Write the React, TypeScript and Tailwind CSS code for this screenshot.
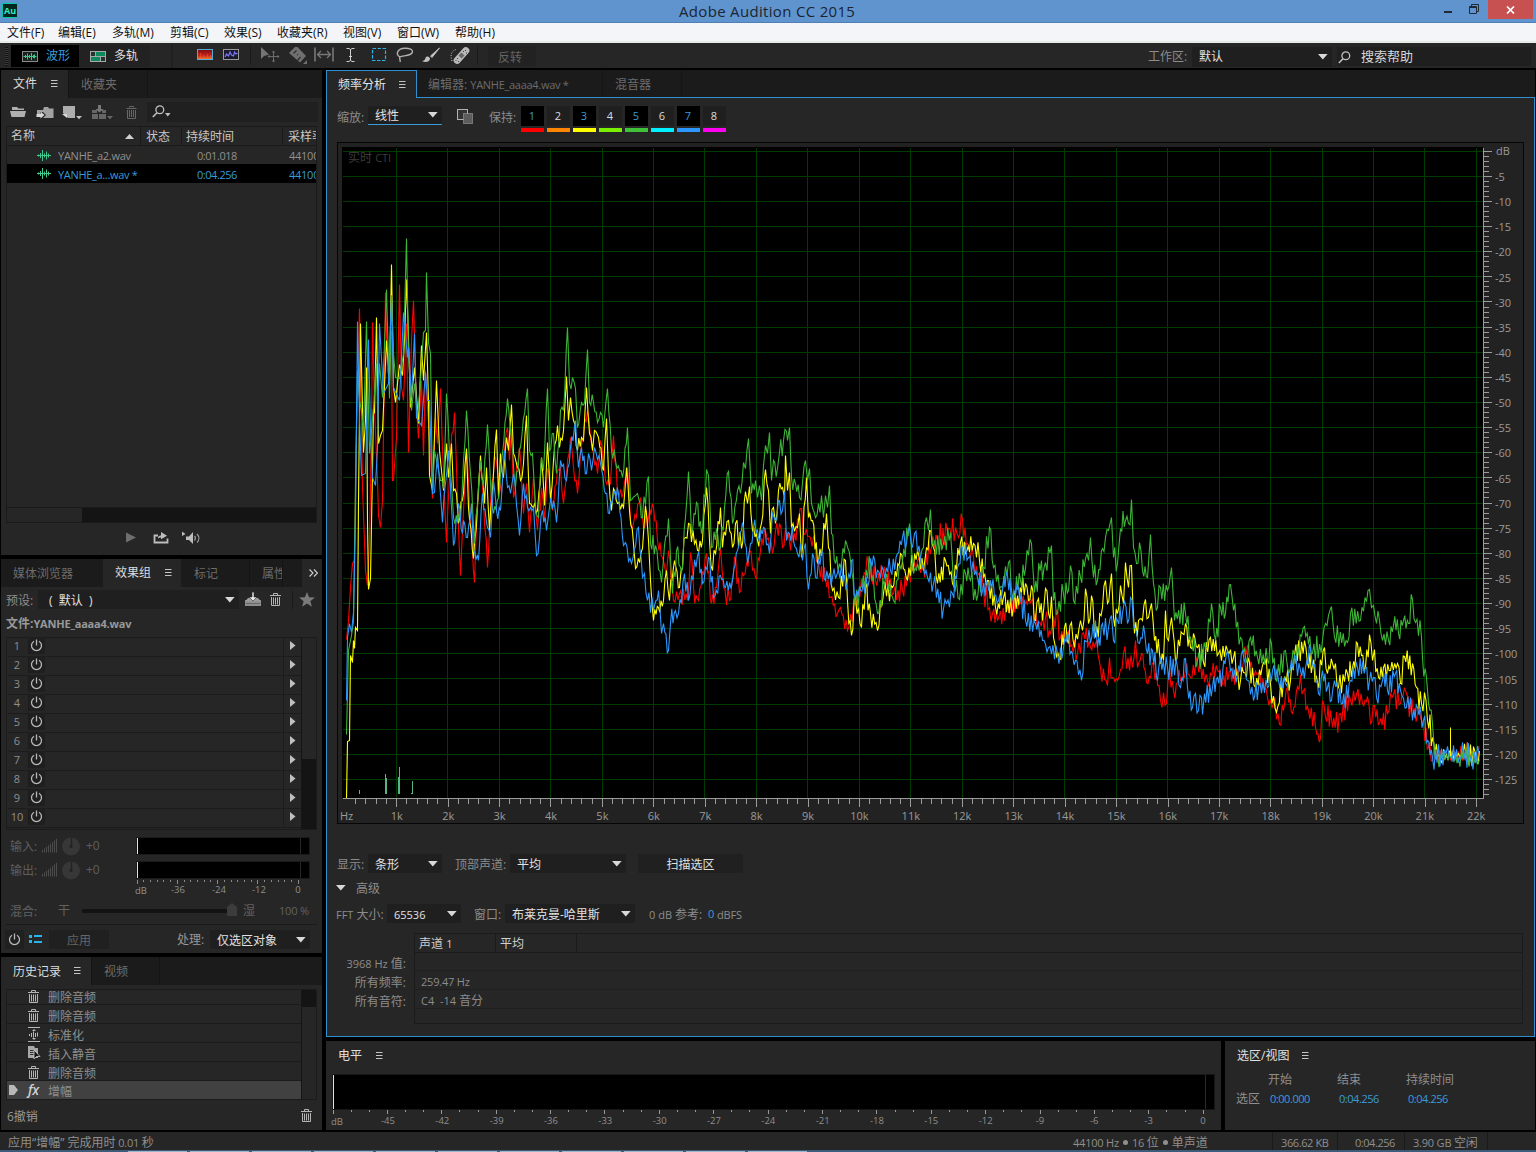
import React from "react";

/* ---------- spectrum data: x,y pairs in panel pixels ---------- */

const RED =
  "346,639 348,620 350,587 352,563 354,560 356,430 359,308 362,487 365,570 367,585 369,540 371,430 372,322 374,407 377,480 378,515 380,527 382,500 385,292 387,370 389,380 391,330 392,480 393,480 396,437 399,284 401,387 403,400 406,323 408,452 411,340 413,300 416,407 418,438 421,380 423,455 425,370 427,407 430,455 432,498 435,417 437,443 440,388 442,450 446,542 450,453 454,412 457,500 460,575 463,510 466,450 469,503 474,582 477,505 480,460 483,503 487,567 490,503 494,455 497,470 501,493 504,450 507,427 509,460 511,428 513,497 519,447 523,513 526,483 529,532 533,478 537,530 541,487 544,520 547,468 552,510 557,470 560,467 563,503 570,437 573,467 577,493 580,453 587,410 590,437 597,473 600,440 605,480 610,483 613,435 617,493 623,490 627,467 630,520 633,523 640,497 643,527 648,517 653,507 657,540 662,557 666,573 668,550 673,600 679,593 687,600 690,552 693,587 698,600 706,553 711,603 716,587 720,547 723,587 729,600 734,557 739,592 743,575 749,550 755,577 760,550 764,527 772,553 775,530 779,523 782,547 788,533 790,550 801,508 803,533 810,537 813,537 817,560 825,577 830,597 837,613 840,607 847,630 853,603 858,593 868,563 875,580 885,573 893,593 902,590 907,577 917,560 923,570 931,547 937,540 948,528 955,527 958,537 962,519 967,543 973,557 983,590 992,613 997,620 1007,607 1020,603 1031,600 1038,623 1045,617 1050,633 1056,610 1060,637 1067,637 1077,653 1083,632 1090,647 1095,643 1100,667 1107,685 1109,657 1112,677 1117,680 1123,653 1132,667 1135,640 1137,667 1141,653 1146,682 1153,663 1160,700 1166,703 1168,673 1173,690 1180,680 1185,670 1190,677 1197,663 1207,680 1217,670 1222,683 1230,670 1237,673 1243,660 1247,645 1252,673 1258,673 1267,697 1273,703 1279,724 1283,710 1287,687 1292,713 1297,686 1303,690 1308,710 1315,727 1320,738 1322,700 1325,717 1330,710 1332,727 1340,713 1350,700 1356,694 1362,703 1367,696 1370,723 1374,705 1379,723 1387,713 1393,694 1400,703 1405,690 1410,707 1417,713 1423,723 1428,747 1432,760";

const YELLOW =
  "346,798 347,741 349,740 350,655 352,662 353,640 354,648 355,627 357,630 358,500 360,323 363,452 365,420 366,367 367,520 368,589 370,578 372,470 373,408 374,413 376,317 378,443 380,435 382,430 386,340 389,380 391,264 393,387 395,402 399,364 402,375 404,340 406,279 408,338 410,407 414,367 418,423 421,345 423,380 426,332 428,400 429,475 432,490 436,380 439,450 443,490 446,443 448,477 451,443 453,490 456,493 458,523 463,493 466,448 468,507 473,558 477,503 480,455 484,503 486,467 489,530 493,473 496,429 498,497 500,453 503,477 506,437 508,450 511,404 513,453 517,467 520,480 523,463 526,415 529,503 533,507 537,510 541,457 544,505 547,442 550,500 553,460 557,425 559,447 563,430 566,376 568,420 570,397 573,420 577,450 581,437 583,440 586,387 589,433 592,450 594,430 598,437 603,470 606,418 608,473 611,510 613,488 617,503 623,507 626,467 629,510 633,543 635,568 642,548 645,505 648,540 650,580 653,620 658,607 663,600 666,570 669,600 674,560 679,587 685,537 688,523 697,550 702,540 706,487 709,540 712,570 715,553 720,507 722,547 728,520 732,547 735,523 741,548 745,491 747,503 749,486 752,530 757,540 761,523 765,469 768,490 770,533 773,507 775,523 778,490 782,487 784,497 785,455 787,490 789,472 791,527 797,527 799,513 801,557 806,477 808,517 812,520 817,563 822,547 826,513 828,547 832,590 838,597 845,560 847,600 851,635 855,597 861,627 865,587 870,613 877,630 883,593 892,587 900,553 907,580 917,550 923,570 929,530 933,547 937,583 945,560 952,583 960,542 965,553 973,543 979,560 987,580 995,607 1003,597 1013,607 1025,583 1028,600 1031,585 1035,620 1038,598 1042,620 1045,588 1048,613 1051,596 1053,637 1059,658 1064,627 1068,643 1071,622 1074,647 1080,620 1082,630 1085,588 1088,623 1091,595 1095,637 1102,607 1105,580 1107,603 1111,573 1113,617 1117,613 1120,585 1123,603 1125,562 1128,587 1131,565 1134,633 1138,620 1142,620 1145,599 1148,617 1151,603 1154,640 1159,653 1163,660 1165,610 1168,640 1171,617 1175,660 1182,633 1185,623 1190,647 1193,633 1197,647 1203,662 1210,637 1218,653 1227,650 1233,657 1240,680 1249,662 1255,687 1263,662 1270,683 1276,712 1283,680 1290,680 1294,655 1304,640 1307,663 1312,665 1317,682 1324,647 1327,673 1332,663 1338,687 1347,673 1352,667 1357,643 1365,667 1369,634 1372,660 1374,649 1378,677 1383,667 1390,670 1397,663 1400,683 1404,656 1412,663 1416,687 1421,703 1424,692 1427,720 1432,737 1437,753";

const GREEN =
  "346,734 348,650 351,635 353,620 355,480 357,370 359,400 361,410 363,433 366,321 369,453 371,430 373,407 376,363 377,407 379,363 382,397 386,289 389,398 391,295 393,353 395,377 399,378 403,353 406,238 408,353 411,410 414,383 417,417 420,380 423,332 425,330 426,272 428,342 430,353 432,493 434,450 440,480 443,488 446,393 450,473 453,517 460,520 466,410 470,473 474,543 480,460 483,487 487,424 490,483 493,513 498,497 502,453 507,398 511,440 515,487 520,447 527,388 529,450 532,453 535,510 538,517 541,457 543,470 547,388 549,450 553,433 556,473 560,410 563,410 567,327 569,383 572,377 575,388 577,427 581,402 584,403 587,349 589,402 593,402 597,422 600,412 603,427 607,388 611,450 615,460 622,477 627,427 630,500 637,493 642,517 648,476 650,543 655,545 661,582 664,545 668,518 672,593 676,550 681,573 685,517 688,471 691,533 696,502 701,533 706,469 708,475 711,547 716,528 720,547 728,471 732,523 737,490 740,493 743,462 745,468 748,438 751,493 755,480 757,497 759,485 761,500 763,465 765,445 767,453 769,432 771,480 773,460 777,468 779,452 783,440 786,431 787,440 789,427 791,477 795,483 799,497 802,482 805,460 807,480 809,468 811,503 815,517 821,495 823,517 825,495 827,507 829,485 831,533 835,563 840,567 845,540 850,560 855,603 860,587 870,565 877,613 885,577 893,600 902,560 909,523 913,573 920,557 926,517 928,530 930,509 933,547 943,543 950,532 953,583 959,599 965,573 970,580 976,600 983,567 989,527 993,567 1002,587 1008,562 1012,597 1020,580 1025,568 1031,543 1034,592 1041,560 1042,580 1045,562 1051,545 1053,600 1057,613 1063,593 1068,590 1070,565 1073,600 1080,577 1085,558 1088,560 1090,537 1093,577 1097,580 1102,548 1105,537 1108,530 1111,517 1113,557 1117,563 1120,528 1125,520 1128,523 1131,499 1133,547 1136,563 1139,542 1142,570 1147,577 1150,534 1153,583 1157,607 1160,587 1167,590 1171,567 1174,620 1185,613 1190,637 1197,660 1205,647 1211,603 1215,640 1220,607 1225,613 1230,584 1233,610 1240,637 1247,657 1250,637 1257,657 1267,660 1271,643 1275,677 1285,650 1288,673 1294,655 1304,626 1312,653 1322,640 1325,623 1331,606 1334,637 1347,642 1350,613 1360,620 1369,589 1371,607 1373,605 1376,623 1379,620 1382,640 1388,640 1393,625 1398,633 1403,620 1408,623 1412,599 1415,622 1421,637 1422,657 1426,677 1428,703 1432,723 1434,753";

const BLUE =
  "346,700 347,637 349,623 351,632 353,612 355,520 357,321 359,420 361,475 365,473 368,339 370,430 372,477 375,485 377,447 379,323 383,393 388,383 391,295 393,387 399,400 403,312 407,357 408,347 411,397 414,333 416,417 421,425 425,372 427,400 429,400 432,493 434,492 437,453 442,522 445,483 448,450 453,545 458,503 462,533 463,520 467,537 471,503 473,550 478,560 482,493 487,527 490,537 493,480 496,510 500,510 504,450 507,487 510,493 513,473 519,535 523,483 527,507 533,507 536,555 539,537 542,510 546,530 549,507 553,500 556,522 560,460 566,480 570,447 575,420 578,467 581,447 586,473 588,453 591,470 594,447 600,463 605,493 609,513 613,493 618,493 623,545 625,542 631,563 638,527 642,577 644,573 647,600 653,610 658,590 661,633 663,623 668,650 670,623 675,610 678,613 684,573 688,600 697,555 702,583 708,557 713,597 720,575 725,587 732,580 737,550 742,522 747,563 753,527 758,537 763,527 769,553 772,512 775,520 779,500 782,510 784,491 786,540 789,533 793,540 797,553 800,543 802,560 805,543 808,589 812,553 815,577 821,550 825,580 832,577 838,570 847,580 851,560 855,597 860,590 867,587 873,555 877,570 883,570 890,570 897,553 902,537 906,543 909,526 912,547 914,533 920,557 927,577 933,583 943,608 952,593 957,567 962,547 968,557 977,577 982,590 987,583 998,600 1002,590 1007,575 1012,597 1018,587 1025,620 1035,623 1042,640 1048,647 1057,653 1063,647 1067,633 1072,653 1075,660 1081,680 1084,640 1090,643 1095,620 1097,647 1102,623 1108,627 1111,615 1113,640 1117,620 1122,613 1124,600 1127,623 1130,597 1133,623 1139,643 1143,625 1147,653 1152,650 1157,680 1160,657 1167,667 1177,667 1180,687 1185,658 1187,687 1192,707 1195,693 1198,710 1201,697 1202,714 1204,693 1212,687 1217,677 1222,673 1227,650 1230,670 1237,673 1242,650 1247,680 1253,700 1258,687 1267,687 1272,670 1278,680 1285,683 1294,655 1300,670 1305,667 1310,648 1313,667 1318,693 1322,670 1327,687 1331,700 1334,680 1342,703 1350,680 1357,667 1365,667 1369,680 1373,677 1376,697 1382,680 1387,690 1395,673 1400,690 1406,707 1410,697 1412,720 1417,707 1423,720 1427,740 1432,757";

function trace(src: string, seed: number) {
  let s = seed;
  const rnd = () => {
    s = (s * 1664525 + 1013904223) % 4294967296;
    return s / 4294967296 - 0.5;
  };
  const keys = src.split(" ").map((p) => p.split(",").map(Number));
  const out: string[] = [];
  let flip = 1;
  for (let i = 0; i < keys.length - 1; i++) {
    const [x0, y0] = keys[i];
    const [x1, y1] = keys[i + 1];
    out.push(`${x0},${y0}`);
    if (x0 < 440) continue;
    const amp = x0 < 640 ? 10 : x0 < 850 ? 15 : 17;
    const n = Math.round((x1 - x0) / 1.4);
    for (let k = 1; k < n; k++) {
      flip = -flip;
      const t = k / n;
      const y = y0 + (y1 - y0) * t + (rnd() * 0.6 + flip * (0.12 + Math.abs(rnd()) * 0.95)) * amp;
      out.push(`${(x0 + (x1 - x0) * t).toFixed(1)},${y.toFixed(1)}`);
    }
  }
  const last = keys[keys.length - 1];
  out.push(`${last[0]},${last[1]}`);
  for (let x = last[0] + 1.5; x < 1480; x += 1.5) {
    flip = -flip;
    out.push(`${x.toFixed(1)},${(755.5 + rnd() * 11 + flip * Math.abs(rnd()) * 20).toFixed(1)}`);
  }
  return out.join(" ");
}

const TRACES = [
  { c: "#ff0000", d: trace(RED, 11) },
  { c: "#ffff00", d: trace(YELLOW, 23) },
  { c: "#3cb535", d: trace(GREEN, 37) },
  { c: "#2c98ff", d: trace(BLUE, 51) },
];

const range = (n: number) => Array.from({ length: n }, (_, i) => i);

function Spectrum() {
  return (
    <svg width="1187" height="682" viewBox="337 142 1187 682" className="block">
      <rect x="337.5" y="142.5" width="1186" height="681" fill="#222222" stroke="#060606" />
      <rect x="342" y="147" width="1141" height="651" fill="#000" />
      <g fill="#003c00">
        {range(22).map((i) => (
          <rect key={i} x={Math.floor(396.3 + i * 51.43)} y="148" width="1" height="650" />
        ))}
        {range(26).map((i) => (
          <rect key={i} x="343" y={Math.floor(151.2 + i * 25.13)} width="1140" height="1" />
        ))}
      </g>
      <text x="348" y="162" fontSize="12" fill="#3c3c3c">实时 <tspan fontSize="11">CTI</tspan></text>
      <g transform="translate(.5 .5)" fill="none" strokeWidth="1.1">
        {TRACES.map((t) => (
          <polyline key={t.c} points={t.d} stroke={t.c} />
        ))}
      </g>
      <path d="M1450.500 756V727.500" stroke="#ffff00" />
      <g fill="#57b48a">
        <rect x="359" y="790" width="1" height="4" />
        <rect x="385" y="774" width="1" height="20" />
        <rect x="386" y="778" width="1" height="16" />
        <rect x="398" y="777" width="1" height="17" />
        <rect x="399" y="767" width="1" height="27" />
        <rect x="411" y="793" width="1" height="1" />
        <rect x="412" y="781" width="1" height="13" />
      </g>
      <g fill="#9c9c9c">
        <rect x="343" y="798" width="1141" height="1" />
        <rect x="1483" y="148" width="1" height="651" />
        {range(111).map((i) => {
          const x = Math.floor(345.2 + i * 10.286);
          return i > 0 ? <rect key={i} x={x} y="799" width="1" height={i % 5 === 0 ? 8 : 5} /> : null;
        })}
        {range(129).map((i) => (
          <rect key={i} x="1484" y={Math.floor(151.2 + i * 5.026)} width={i % 5 === 0 ? 8 : 5} height="1" />
        ))}
      </g>
      <g fontSize="11" fill="#9a9a9a">
        <text x="340" y="820">Hz</text>
        {range(22).map((i) => (
          <text key={i} x={396.8 + i * 51.4} y="820" textAnchor="middle">{`${i + 1}k`}</text>
        ))}
        <text x="1496" y="155">dB</text>
        {range(25).map((i) => (
          <text key={i} x="1495" y={181 + i * 25.13}>{`-${(i + 1) * 5}`}</text>
        ))}
      </g>
    </svg>
  );
}

/* ---------- small parts ---------- */

const Tri = ({ className = "" }: { className?: string }) => (
  <svg width="10" height="6" viewBox="0 0 10 6" className={`shrink-0 ${className}`}>
    <path d="M0 0h9.600L4.800 5.600z" fill="#d8d8d8" />
  </svg>
);

const Burger = ({ className = "" }: { className?: string }) => (
  <svg width="7" height="8" viewBox="0 0 7 8" className={`shrink-0 ${className}`} fill="#c4c4c4">
    <path d="M0 0h6.500v1H0zM0 3h6.500v1H0zM0 6h6.500v1H0z" />
  </svg>
);

const Trash = ({ c = "#b4b4b4", className = "" }: { c?: string; className?: string }) => (
  <svg width="11" height="13" viewBox="0 0 11 13" className={`shrink-0 ${className}`}>
    <path d="M3.500 2V.5h4V2" stroke={c} fill="none" />
    <path d="M0 2.500h11" stroke={c} />
    <path d="M1.500 4v8.500h8V4M3.500 4.500v7M5.500 4.500v7M7.500 4.500v7" stroke={c} fill="none" />
  </svg>
);

const Power = ({ className = "" }: { className?: string }) => (
  <svg width="13" height="13" viewBox="0 0 13 13" className={`shrink-0 ${className}`} fill="none" stroke="#b8b8b8" strokeWidth="1.3">
    <path d="M4 2.200a5 5 0 1 0 5 0M6.500.5v6" />
  </svg>
);

const Search = ({ className = "" }: { className?: string }) => (
  <svg width="13" height="13" viewBox="0 0 13 13" className={`shrink-0 ${className}`} fill="none" stroke="#c0c0c0">
    <circle cx="7.800" cy="4.800" r="3.900" strokeWidth="1.300" />
    <path d="M5 7.700L.8 12" strokeWidth="1.600" />
  </svg>
);

const Wave = ({ className = "" }: { className?: string }) => (
  <svg width="14" height="11" viewBox="0 0 14 11" className={`shrink-0 ${className}`} stroke="#3fc98f" fill="none">
    <path d="M0 5.500h14M1.500 4.500v2M3.500 3v5M5.500 0v11M7.500 3.500v4M9.500 1.500v8M11.500 3.500v4" />
  </svg>
);

const Drop = ({ w, children, underline }: { w: string; children: React.ReactNode; underline?: boolean }) => (
  <div
    className={`${w} flex h-[19px] shrink-0 items-center justify-between bg-[#1f1f1f] pr-[4px] pl-[7px] text-[#e2e2e2] ${
      underline ? "border-b border-[#3a9bd9]" : ""
    }`}
  >
    <span className="pt-[2px]">{children}</span>
    <Tri />
  </div>
);

/* ---------- top bars ---------- */

function TitleBar() {
  return (
    <div className="flex h-[23px] shrink-0 border-b border-[#4f7fb5] bg-[#6094ce]">
      <div className="mt-[3px] ml-[2px] flex h-[15px] w-[16px] items-center justify-center rounded-[1px] border border-[#00c8a8] bg-[#04261f] text-[9px] leading-none font-bold text-[#2ee8c4]">
        Au
      </div>
      <div className="flex-1 pl-[661px] text-[15px] leading-[23px] tracking-[0.32px] text-[#1b2430]">Adobe Audition CC 2015</div>
      <div className="flex">
        <svg width="40" height="20" viewBox="1444 0 40 20" fill="none" stroke="#1f2a36">
          <path d="M1444 12h8" strokeWidth="2" />
          <path d="M1469.500 6.500h7v7h-7zM1469 7.500h8" />
          <path d="M1471.500 6V4.500h7v7h-2" />
        </svg>
        <div className="mr-[3px] ml-[4px] flex h-[19px] w-[45px] items-center justify-center bg-[#c75050]">
          <svg width="9" height="8" viewBox="0 0 9 8" stroke="#fff" strokeWidth="1.700">
            <path d="M1 .5l7 7M8 .5l-7 7" />
          </svg>
        </div>
      </div>
    </div>
  );
}

function MenuBar() {
  return (
    <div className="flex h-[20px] shrink-0 border-b-2 border-[#e6ebea] bg-[#f4f5f8] pl-[7px] text-[12px] leading-[20px] text-[#111]">
      <div className="w-[51px]">文件(F)</div>
      <div className="w-[54px]">编辑(E)</div>
      <div className="w-[58px]">多轨(M)</div>
      <div className="w-[54px]">剪辑(C)</div>
      <div className="w-[53px]">效果(S)</div>
      <div className="w-[66px]">收藏夹(R)</div>
      <div className="w-[54px]">视图(V)</div>
      <div className="w-[58px]">窗口(W)</div>
      <div>帮助(H)</div>
    </div>
  );
}

function ToolIcons() {
  return (
    <svg width="330" height="25" viewBox="150 43 330 25" fill="none" className="shrink-0">
      <defs>
        <linearGradient id="heat" x1="0" y1="0" x2="0" y2="1">
          <stop offset="0" stopColor="#7a0d10" />
          <stop offset=".6" stopColor="#c8241a" />
          <stop offset="1" stopColor="#f08a2c" />
        </linearGradient>
      </defs>
      <path d="M172 43v25" stroke="#1a1a1a" />
      <rect x="197.500" y="49.500" width="15" height="10" fill="url(#heat)" stroke="#59a9d6" />
      <path d="M200.500 53v6M203.500 55v4M207.500 54v5M210.500 55v4" stroke="#f0602c" strokeOpacity=".5" />
      <rect x="223.500" y="49.500" width="15" height="10" fill="#1a1a2c" stroke="#9a9a9a" />
      <path d="M225 57l1.500-3 2 2 1.500-4 1.500 3 2 1 1-4 1.500 2 1.500-1" stroke="#7878f8" strokeWidth="1.200" />
      <path d="M250.500 46v19M477.500 46v19" stroke="#1a1a1a" />
      <path d="M261 47v12l3-3 5-1.500z" fill="#757575" />
      <path d="M273.500 51v11M268 56.500h11" stroke="#6c6c6c" />
      <path d="M273.500 50.500l1.800 2h-3.600zM273.500 62.500l1.800-2h-3.600zM267.500 56.500l2-1.800v3.600zM279.500 56.500l-2-1.800v3.600z" fill="#6c6c6c" />
      <path d="M289 53l6-6h2.500l8.500 9-6 6.500z" fill="#707070" />
      <path d="M293.500 53.500l3-3M300.500 57l-3 3.500M297 54.500l1 .5" stroke="#2a2a2a" strokeWidth="1.200" />
      <path d="M307 60v4h-4z" fill="#707070" />
      <path d="M315 47.500v14M333 47.500v14" stroke="#777" strokeWidth="1.600" />
      <path d="M318 54.500h12M321 51l-3.500 3.500 3.500 3.500M327 51l3.500 3.500-3.500 3.500" stroke="#777" strokeWidth="1.300" />
      <path d="M346.500 48.500h2.500l1.500 1 1.500-1h2.500M350.500 49v12M346.500 61.500h2.500l1.500-1 1.500 1h2.500M349 56.500h3" stroke="#cfcfcf" />
      <rect x="372.500" y="48.500" width="13" height="12" stroke="#29b2ea" strokeWidth="1.200" strokeDasharray="3.500 1.500" />
      <path d="M400 57c-5-3-2.500-8.500 5-8.800 8-.3 9.500 4.300 5 6.300-4 1.800-8 1-10 2.500-1.500 1.200 1 2.300 0 5" stroke="#b0b0b0" strokeWidth="1.400" />
      <path d="M439.500 48l-9 8 1.500 1.500z" fill="#d0d0d0" stroke="#b8b8b8" />
      <path d="M422 61c2 0 3-1 3.500-3 1-2.500 4.500-1.500 4.500 1-.5 3-5 4-8 2z" fill="#c0c0c0" />
      <rect x="-3.500" y="-10" width="7" height="20" rx="3.500" transform="translate(461.500 55.500) rotate(42)" fill="#b9b9b9" />
      <path d="M458.500 55.500l3-3 3 3-3 3z" fill="#6a6a6a" />
      <path d="M455.500 60.500h1M458 61.500h1M457 58.500h1M465 50.500h1M466 53h1M463 51.500h1" stroke="#444" />
      <path d="M452 61c-2-5-1-11 5-11.500" stroke="#c8c8c8" strokeDasharray="1 1.500" />
    </svg>
  );
}

function ToolBar() {
  return (
    <div className="flex h-[25px] shrink-0 items-start bg-[#262626] text-[12px] leading-[28px]">
      <div className="mt-[4px] ml-[5px] h-[19px] w-[3px] bg-[repeating-linear-gradient(#111_0_1px,#3a3a3a_1px_2px)]" />
      <div className="mt-[2px] ml-[3px] flex h-[22px] w-[68px] items-center bg-black pl-[11px] text-[#3a9bd9]">
        <svg width="16" height="11" viewBox="0 0 16 11" className="mr-[8px]" fill="none">
          <rect x=".5" y=".5" width="15" height="10" stroke="#8a8a8a" fill="#15241d" />
          <path d="M1.500 5.500h13M3.500 4v3M5.500 2.500v6M7.500 4v3M9.500 2v7M11.500 4v3M12.500 3.500v4" stroke="#3fc98f" />
        </svg>
        波形
      </div>
      <div className="mt-[2px] flex h-[22px] w-[71px] items-center bg-[#222] pl-[11px] text-[#e0e0e0]">
        <svg width="16" height="11" viewBox="0 0 16 11" className="mr-[8px]">
          <rect width="16" height="11" fill="#a5aaa8" />
          <path d="M1 1h4v4H1zM6 1h9v4H6zM1 6h9v4H1zM11 6h4v4h-4z" fill="#0d8a5c" />
          <path d="M1 1h4v4H1zM11 6h4v4h-4z" fill="#24332d" />
        </svg>
        多轨
      </div>
      <ToolIcons />
      <div className="mt-[3px] ml-[8px] h-[20px] w-[48px] bg-[#222] pl-[10px] leading-[23px] text-[#646464]">反转</div>
      <div className="flex-1" />
      <div className="w-[44px] text-[#8c8c8c]">工作区:</div>
      <div className="mt-[4px] flex h-[20px] w-[140px] items-center justify-between bg-[#1f1f1f] pr-[4px] pl-[7px] text-[#e2e2e2]">
        默认
        <Tri className="-mt-px" />
      </div>
      <div className="mt-[4px] mr-[5px] ml-[5px] flex h-[19px] w-[194px] items-center bg-[#1f1f1f] pl-[1px] text-[13px] text-[#d6d6d6]">
        <Search className="mt-[1px] mr-[10px]" />
        <span className="-mt-[2px]">搜索帮助</span>
      </div>
    </div>
  );
}

/* ---------- left column ---------- */

function FilesPanel() {
  return (
    <div className="flex h-[485px] flex-col bg-[#262626]">
      <div className="flex h-[28px] bg-[#1b1b1b] leading-[30px]">
        <div className="flex w-[67px] items-center bg-[#262626] pl-[12px] text-[#dcdcdc]">
          <span className="w-[38px]">文件</span>
          <Burger />
        </div>
        <div className="w-[80px] border-r border-l border-[#141414] pl-[12px] text-[#6c6c6c]">收藏夹</div>
      </div>
      <div className="flex h-[28px] items-center">
        <svg width="146" height="24" viewBox="1 100 146 24" className="shrink-0">
          <path d="M12 110v-3h5l1.500 1.500H24v1.500zM10 111h16l-1.500 6h-13z" fill="#b0b0b0" />
          <path d="M37 110h6l1-3h4l1 1.500h4.500V118H43l3-3-3-3h-3v3h-3z" fill="#a2a2a2" />
          <path d="M36.500 114h4v-2.500l4 3.500-4 3.500V117h-4z" fill="#d8d8d8" />
          <path d="M63 106h12v12h-7l-5-5z" fill="#adadad" />
          <path d="M62 114h5v4z" fill="#d8d8d8" />
          <path d="M76 116h6l-3 3.200z" fill="#c0c0c0" />
          <path d="M92 110h5v3h-5zM92 114h6v5h-6zM99 114h7v5h-7zM102 110h4v3h-4z" fill="#666" />
          <path d="M98 105h3v4h2.500l-4 3.500-4-3.500H98z" fill="#777" />
          <path d="M107 116h6l-3 3.200z" fill="#666" />
          <path d="M129.500 107.500v-1h4v1M126.500 108.500h10M127.500 110v8.500h8V110M129.500 110v7M131.500 110v7M133.500 110v7" stroke="#666" fill="none" />
        </svg>
        <div className="flex h-[20px] w-[171px] items-center bg-[#202020] pl-[5px]">
          <Search className="-mt-px" />
          <svg width="6" height="4" viewBox="0 0 6 4" className="mt-[5px]">
            <path d="M0 0h5.500L2.800 3.500z" fill="#c0c0c0" />
          </svg>
        </div>
      </div>
      <div className="ml-[5px] flex h-[397px] w-[311px] flex-col border border-[#1a1a1a] text-[11px]">
        <div className="flex h-[19px] border-b border-[#1a1a1a] text-[12px] leading-[20px] text-[#c8c8c8]">
          <div className="flex w-[134px] items-center justify-between border-r border-[#1a1a1a] pr-[6px] pl-[4px]">
            名称
            <svg width="9" height="5" viewBox="0 0 9 5"><path d="M0 5h9L4.500 0z" fill="#d0d0d0" /></svg>
          </div>
          <div className="w-[41px] border-r border-[#1a1a1a] pl-[5px]">状态</div>
          <div className="w-[101px] border-r border-[#1a1a1a] pl-[4px]">持续时间</div>
          <div className="w-[33px] overflow-hidden pl-[5px] whitespace-nowrap">采样率</div>
        </div>
        <div className="flex h-[18px] items-center pt-px tracking-[-0.25px] text-[#8f8f8f]">
          <Wave className="ml-[30px]" />
          <div className="ml-[7px] w-[139px] pt-px">YANHE_a2.wav</div>
          <div className="w-[92px] pt-px tracking-[-0.45px]">0:01.018</div>
          <div className="w-[27px] overflow-hidden pt-px">44100</div>
        </div>
        <div className="flex h-[19px] items-center bg-black tracking-[-0.25px] text-[#3a9bd9]">
          <Wave className="ml-[30px]" />
          <div className="ml-[7px] w-[139px] pt-[2px] tracking-[-0.32px]">YANHE_a...wav *</div>
          <div className="w-[92px] pt-[2px] tracking-[-0.45px]">0:04.256</div>
          <div className="w-[27px] overflow-hidden pt-[2px]">44100</div>
        </div>
        <div className="flex-1" />
        <div className="flex h-[15px] border-t border-[#1a1a1a] bg-[#141414]">
          <div className="w-[75px] bg-[#262626]" />
        </div>
      </div>
      <svg width="80" height="16" viewBox="124 530 80 16" className="mt-[7px] ml-[123px]" fill="none">
        <path d="M126 532.500v10l10-5z" fill="#6e6e6e" />
        <path d="M158 535.500h-3.500v7h13v-4" stroke="#bdbdbd" strokeWidth="1.800" />
        <path d="M158 538.500c0-3 2-3 3-3v-3.500l6 3.700-6 3.500V537.500c-1 0-2 0-3 1z" fill="#bdbdbd" />
        <path d="M182 531.500v4.500l3.500-2zM186 536.500h3l4-4.500v12l-4-4h-3z" fill="#bdbdbd" />
        <path d="M194.500 536c1 1.200 1 3.300 0 4.500M197 534c2.500 2.500 2.500 6 0 8.500" stroke="#9a9a9a" strokeWidth="1.200" />
      </svg>
    </div>
  );
}

function Gain({ label }: { label: string }) {
  return (
    <div className="flex h-[24px] items-center text-[#5e5e5e]">
      <div className="ml-[9px] w-[32px] pt-px text-[12px]">{label}</div>
      <svg width="40" height="19" viewBox="0 0 40 19" className="shrink-0">
        <g fill="#4c4c4c">
          {range(8).map((i) => (
            <rect key={i} x={i * 2} y={13 - i * 1.6} width="1" height={2.500 + i * 1.600} />
          ))}
        </g>
        <circle cx="29" cy="9.500" r="9" fill="#373737" />
        <path d="M29.500 1v9" stroke="#222" strokeWidth="1.300" />
        <circle cx="29" cy="9.500" r="1.500" fill="#222" />
      </svg>
      <div className="ml-[4px] w-[50px]">+0</div>
      <div className="flex h-[18px] w-[174px] justify-between border border-[#1a1a1a] bg-black">
        <div className="w-px bg-[#ffff00]" />
        <div className="mr-[8px] w-px bg-[#262626]" />
      </div>
    </div>
  );
}

function EffectsPanel() {
  return (
    <div className="mt-[4px] flex h-[394px] flex-col bg-[#262626]">
      <div className="flex h-[28px] bg-[#1b1b1b] text-[12px] leading-[30px] whitespace-nowrap text-[#6c6c6c]">
        <div className="w-[102px] pl-[12px]">媒体浏览器</div>
        <div className="flex w-[78px] items-center bg-[#262626] pl-[12px] text-[#dcdcdc]">
          <span className="w-[50px]">效果组</span>
          <Burger />
        </div>
        <div className="w-[69px] border-r border-[#141414] pl-[13px]">标记</div>
        <div className="w-[33px] overflow-hidden border-r border-[#141414] pl-[12px]">属性</div>
        <div className="w-[19px]" />
        <div className="flex flex-1 items-center bg-[#262626] pl-[7px]">
          <svg width="9" height="8" viewBox="0 0 9 8" fill="none" stroke="#ccc" strokeWidth="1.200"><path d="M.5.500L4 4 .5 7.500M5 .500L8.500 4 5 7.500" /></svg>
        </div>
      </div>
      <div className="mt-[3px] flex h-[19px] items-center pl-[5px] text-[12px]">
        <div className="w-[32px] pt-[2px] text-[#8c8c8c]">预设:</div>
        <Drop w="w-[201px]"><span className="pl-[4px]">(&nbsp; 默认 &nbsp;)</span></Drop>
        <svg width="16" height="15" viewBox="0 0 16 15" className="ml-[6px]">
          <path d="M0 8h16v6H0z" fill="#8d8d8d" /><path d="M3 6h10l3 3.500H0z" fill="#9d9d9d" />
          <path d="M7 0h2v5h3L8 9 4 5h3z" fill="#e8e8e8" stroke="#262626" strokeWidth=".6" />
          <path d="M1 11.500h14" stroke="#6a6a6a" />
        </svg>
        <Trash className="ml-[9px]" />
        <div className="ml-[11px] h-[18px] w-px bg-[#191919]" />
        <svg width="16" height="15" viewBox="0 0 16 15" className="ml-[6px]"><path d="M8 0l2.100 5.300 5.700.3-4.400 3.600 1.500 5.500L8 11.600l-4.900 3.100 1.500-5.500L.2 5.600l5.700-.3z" fill="#7a7a7a" /></svg>
      </div>
      <div className="mt-[5px] h-[18px] pl-[5px] text-[12px] leading-[19px] font-bold text-[#999]">文件:<span className="text-[11px] tracking-[-0.2px]">YANHE_aaaa4.wav</span></div>
      <div className="mt-[5px] ml-[5px] flex h-[193px] w-[311px] border border-[#1b1b1b]">
        <div className="h-[190px] flex-1 text-[11px] text-[#8f8f8f]">
          {range(10).map((i) => (
            <div key={i} className="flex h-[19px] items-center border-b border-[#1c1c1c] pb-[3px]">
              <div className="w-[20px] text-center leading-[14px]">{i + 1}</div>
              <div className="ml-px flex h-[17px] w-[17px] items-center justify-center border-l border-[#1c1c1c] bg-[#1f1f1f] pr-px">
                <Power />
              </div>
              <div className="flex-1" />
              <div className="-mb-[3px] flex h-[18px] w-[18px] items-center border-l border-[#1c1c1c] pb-[3px] pl-[6px]">
                <svg width="6" height="9" viewBox="0 0 6 9"><path d="M0 0v9l5.500-4.500z" fill="#c0c0c0" /></svg>
              </div>
            </div>
          ))}
        </div>
        <div className="w-[15px] border-l border-[#151515] bg-[#141414]">
          <div className="h-[121px] bg-[#262626]" />
        </div>
      </div>
      <div className="mt-[4px] text-[12px]">
        <Gain label="输入:" />
        <Gain label="输出:" />
      </div>
      <svg width="186" height="17" viewBox="133 880 186 17" className="-mt-[2px] ml-[132px]">
        <g fill="#8a8a8a">
          {range(25).map((i) => (
            <rect key={i} x={Math.floor(137 + i * 6.72)} y="880" width="1" height={i % 6 === 0 ? 4 : 2} />
          ))}
        </g>
        <g fontSize="9.500" fill="#8f8f8f">
          <text x="135" y="893.500">dB</text>
          <g textAnchor="middle"><text x="178" y="893">-36</text><text x="219" y="893">-24</text><text x="259" y="893">-12</text><text x="298" y="893">0</text></g>
        </g>
      </svg>
      <div className="mt-[3px] flex h-[22px] items-center pl-[9px] text-[12px] text-[#626262]">
        <div className="w-[48px] pt-px">混合:</div>
        <div className="w-[24px]">干</div>
        <div className="h-[4px] w-[145px] bg-[#131313]" />
        <svg width="10" height="13" viewBox="0 0 10 13" className="-mt-[3px]"><path d="M0 4l5-4 5 4v9H0z" fill="#3c3c3c" /></svg>
        <div className="ml-[6px] w-[36px]">湿</div>
        <div className="text-[11px] tracking-[-0.2px]">100 %</div>
      </div>
      <div className="mt-[2px] ml-[5px] h-px w-[311px] bg-[#191919]" />
      <div className="mt-[5px] flex h-[19px] items-center text-[12px]">
        <div className="ml-[4px] flex h-[19px] w-[19px] items-center justify-center bg-[#202020]"><Power /></div>
        <svg width="13" height="9" viewBox="0 0 13 9" className="ml-[5px]" fill="#2ab4ec"><path d="M0 0h3v3H0zM5 0h8v2H5zM0 5h3v3H0zM5 6h8v2H5z" /></svg>
        <div className="ml-[7px] h-[19px] w-[60px] bg-[#202020] text-center leading-[21px] text-[#666]">应用</div>
        <div className="ml-[68px] w-[33px] pt-px text-[#999]">处理:</div>
        <Drop w="w-[100px]">仅选区对象</Drop>
      </div>
    </div>
  );
}

const HISTORY = [
  { icon: "del", t: "删除音频" },
  { icon: "del", t: "删除音频" },
  { icon: "norm", t: "标准化" },
  { icon: "ins", t: "插入静音" },
  { icon: "del", t: "删除音频" },
  { icon: "fx", t: "增幅" },
];

function HistoryIcon({ kind }: { kind: string }) {
  if (kind === "del") return <Trash />;
  if (kind === "norm")
    return (
      <svg width="12" height="15" viewBox="0 0 12 15" stroke="#b8b8b8" fill="none">
        <path d="M0 .5h12M0 14.500h12M1.500 7v2M3.500 6v4M5.500 4.500v6M7.500 6v4M9.500 5.500v4" />
        <path d="M4 4l2-2 2 2zM4 11l2 2 2-2z" fill="#b8b8b8" stroke="none" />
      </svg>
    );
  if (kind === "ins")
    return (
      <svg width="13" height="14" viewBox="0 0 13 14">
        <path d="M0 0h6l1 2h3v10H0z" fill="#a8a8a8" /><path d="M2 4.500h5M2 6.500h5M2 8.500h4" stroke="#333" />
        <path d="M6 4v9l2.500-2.500H12z" fill="#111" stroke="#d0d0d0" strokeWidth=".8" />
      </svg>
    );
  return <span className="font-['Open_Sans',sans-serif] text-[13.5px] leading-[14px] font-semibold tracking-[-0.5px] text-[#d0d0d0] italic">fx</span>;
}

function HistoryPanel() {
  return (
    <div className="mt-[4px] flex h-[173px] flex-col bg-[#262626] text-[12px]">
      <div className="flex h-[28px] bg-[#1b1b1b] leading-[29px]">
        <div className="flex w-[90px] items-center bg-[#262626] pl-[12px] text-[#dcdcdc]">
          <span className="w-[61px]">历史记录</span>
          <Burger />
        </div>
        <div className="w-[69px] border-r border-l border-[#141414] pl-[12px] text-[#6c6c6c]">视频</div>
      </div>
      <div className="mt-[4px] ml-[5px] flex h-[111px] w-[311px] border border-[#1b1b1b]">
        <div className="flex flex-1 flex-col justify-end overflow-hidden text-[#8e8e8e]">
          {HISTORY.map((h, i) => (
            <div
              key={i}
              className={`flex shrink-0 items-center ${i === 5 ? "h-[18px] bg-[#414141]" : "h-[19px] border-b border-[#1b1b1b] pt-[2px]"} ${i === 0 ? "-mt-[3px]" : ""}`}
            >
              <div className="w-[21px] pl-[2px]">
                {i === 5 && <svg width="9" height="10" viewBox="0 0 9 10"><path d="M0 0h5l4 5-4 5H0z" fill="#b8b8b8" /></svg>}
              </div>
              <div className="flex w-[20px] items-center">
                <HistoryIcon kind={h.icon} />
              </div>
              <div className="pt-[3px] leading-[15px]">{h.t}</div>
            </div>
          ))}
        </div>
        <div className="w-[15px] border-l border-[#151515] bg-[#262626]"><div className="h-[17px] bg-[#141414]" /></div>
      </div>
      <div className="mt-[4px] flex h-[22px] items-center justify-between pr-[10px] pl-[6px] text-[#999]">
        <span className="pt-[3px]">6撤销</span>
        <Trash />
      </div>
    </div>
  );
}

/* ---------- frequency analysis ---------- */

const HOLDS = [
  { bar: "bg-[#ff0000]", on: true },
  { bar: "bg-[#ff8400]", on: false },
  { bar: "bg-[#ffff00]", on: true },
  { bar: "bg-[#78f000]", on: false },
  { bar: "bg-[#3fc13a]", on: true },
  { bar: "bg-[#00f0ff]", on: false },
  { bar: "bg-[#2c98ff]", on: true },
  { bar: "bg-[#ff00f0]", on: false },
];

function FrequencyPanel() {
  return (
    <div className="flex h-[967px] flex-col bg-[#262626] text-[12px]">
      <div className="flex h-[28px] leading-[29px] text-[#6c6c6c]">
        <div className="flex w-[91px] items-center border-t border-r border-l border-[#3190cc] pl-[11px] text-[#e4e4e4]">
          <span className="w-[61px]">频率分析</span>
          <Burger />
        </div>
        <div className="flex flex-1 border-b border-[#3190cc] bg-[#1b1b1b] leading-[30px]">
          <div className="w-[186px] border-r border-[#161616] pl-[11px]">编辑器: <span className="text-[11px] tracking-[-0.28px]">YANHE_aaaa4.wav *</span></div>
          <div className="w-[79px] border-r border-[#161616] pl-[12px]">混音器</div>
        </div>
      </div>
      <div className="flex flex-1 flex-col border-r border-b border-l border-[#3190cc] text-[#8c8c8c]">
        <div className="flex h-[44px] items-start pt-[8px] pl-[10px]">
          <div className="w-[31px] leading-[23px]">缩放:</div>
          <Drop w="w-[74px]" underline>线性</Drop>
          <svg width="17" height="16" viewBox="0 0 17 16" className="mt-[3px] ml-[15px]">
            <rect x=".5" y=".5" width="10" height="10" fill="#333" stroke="#b0b0b0" />
            <rect x="6.500" y="4.500" width="9" height="10" fill="#5c5c5c" stroke="#b0b0b0" strokeDasharray="1 1" />
          </svg>
          <div className="ml-[15px] w-[32px] leading-[23px]">保持:</div>
          <div className="flex gap-[3px] text-[11px]">
            {HOLDS.map((h, i) => (
              <div key={i} className="w-[23px]">
                <div className={`h-[20px] pr-px text-center leading-[20px] ${h.on ? "bg-black text-[#3a9bd9]" : "bg-[#1f1f1f] text-[#dcdcdc]"}`}>{i + 1}</div>
                <div className={`mt-[2px] h-[4px] ${h.bar}`} />
              </div>
            ))}
          </div>
        </div>
        <div className="ml-[10px]"><Spectrum /></div>
        <div className="mt-[30px] flex h-[19px] items-center pl-[10px]">
          <div className="w-[31px] pt-[2px]">显示:</div>
          <Drop w="w-[74px]">条形</Drop>
          <div className="ml-[13px] w-[55px] pt-[2px]">顶部声道:</div>
          <Drop w="w-[116px]">平均</Drop>
          <div className="ml-[12px] h-[19px] w-[105px] bg-[#202020] text-center leading-[21px] text-[#e0e0e0]">扫描选区</div>
        </div>
        <div className="mt-[5px] flex h-[20px] items-center pl-[9px]">
          <Tri className="mr-[10px]" />
          <span className="pt-px">高级</span>
        </div>
        <div className="mt-[6px] flex h-[19px] items-center pl-[9px]">
          <div className="w-[51px] pt-[2px]"><span className="text-[11px]">FFT</span> 大小:</div>
          <Drop w="w-[74px]"><span className="text-[11px]">65536</span></Drop>
          <div className="ml-[13px] w-[31px] pt-[2px]">窗口:</div>
          <Drop w="w-[130px]">布莱克曼-哈里斯</Drop>
          <div className="ml-[14px] w-[59px] pt-[2px]"><span className="text-[11px]">0 dB</span> 参考:</div>
          <div className="w-[9px] pt-px text-[11px] text-[#3a9bd9]">0</div>
          <div className="pt-[3px] text-[11px] tracking-[-0.2px]">dBFS</div>
        </div>
        <div className="mt-[10px] flex">
          <div className="w-[79px] pt-[21px] text-right leading-[19px]">
            <div><span className="text-[11px]">3968 Hz</span> 值:</div>
            <div>所有频率:</div>
            <div>所有音符:</div>
          </div>
          <div className="ml-[8px] h-[91px] w-[1109px] border border-[#1b1b1b]">
            <div className="flex h-[19px] border-b border-[#1b1b1b] leading-[20px] text-[#d0d0d0]">
              <div className="w-[81px] border-r border-[#1b1b1b] pl-[4px]">声道 <span className="text-[11px]">1</span></div>
              <div className="w-[81px] border-r border-[#1b1b1b] pl-[4px]">平均</div>
            </div>
            <div className="h-[18px] border-b border-[#1f1f1f]" />
            <div className="h-[19px] border-b border-[#1f1f1f] pl-[6px] text-[11px] leading-[22px] tracking-[-0.2px]">259.47 Hz</div>
            <div className="h-[19px] border-b border-[#1f1f1f] pl-[6px] text-[11px] leading-[21px]">C4&nbsp; -14 <span className="text-[12px]">音分</span></div>
          </div>
        </div>
      </div>
    </div>
  );
}

function LevelPanel() {
  return (
    <div className="flex h-[89px] w-[895px] flex-col bg-[#262626] text-[12px]">
      <div className="flex h-[29px] items-center pl-[12px] text-[#e0e0e0]">
        <span className="w-[38px]">电平</span>
        <Burger />
      </div>
      <div className="mt-[4px] ml-[6px] flex h-[36px] w-[883px] justify-between border border-[#171717] bg-black">
        <div className="w-px bg-[#ffff00]" />
        <div className="mr-[8px] w-px bg-[#2a2a2a]" />
      </div>
      <svg width="895" height="20" viewBox="326 1110 895 20">
        <g fill="#999">
          {range(49).map((i) => (
            <rect key={i} x={Math.floor(333 + i * 18.130)} y="1110" width="1" height={i % 3 === 0 ? 4 : 2} />
          ))}
        </g>
        <g fontSize="9.500" fill="#8f8f8f">
          <text x="331" y="1125">dB</text>
          {range(16).map((i) => (
            <text key={i} x={388 + i * 54.330} y="1124" textAnchor="middle">{i === 15 ? "0" : `-${45 - i * 3}`}</text>
          ))}
        </g>
      </svg>
    </div>
  );
}

function SelectionPanel() {
  return (
    <div className="h-[89px] w-[310px] bg-[#262626] text-[12px] text-[#8e8e8e]">
      <div className="flex h-[29px] items-center pl-[12px] text-[#e0e0e0]">
        <span className="w-[65px]">选区/视图</span>
        <Burger />
      </div>
      <div className="flex h-[19px] items-center pl-[43px]">
        <div className="w-[69px]">开始</div><div className="w-[69px]">结束</div><div>持续时间</div>
      </div>
      <div className="flex h-[19px] items-center pl-[11px]">
        <div className="w-[34px]">选区</div>
        <div className="flex text-[11px] tracking-[-0.45px] text-[#3a9bd9]"><div className="w-[69px]">0:00.000</div><div className="w-[69px]">0:04.256</div><div>0:04.256</div></div>
      </div>
    </div>
  );
}

function StatusBar() {
  return (
    <div className="flex h-[18px] shrink-0 bg-[#262626] text-[11px] leading-[21px] tracking-[-0.2px] whitespace-nowrap text-[#8f8f8f]">
      <div className="w-[1073px] pl-[8px]"><span className="text-[12px] tracking-normal">应用“增幅” 完成用时</span> 0.01 <span className="text-[12px]">秒</span></div>
      <div className="flex h-[18px] w-[200px] items-center gap-[4px] border-r border-[#1a1a1a] pt-[2px]">
        <span>44100 Hz</span>
        <span className="h-[5px] w-[5px] rounded-full bg-[#8f8f8f]" />
        <span>16 <span className="text-[12px]">位</span></span>
        <span className="h-[5px] w-[5px] rounded-full bg-[#8f8f8f]" />
        <span className="text-[12px] tracking-normal">单声道</span>
      </div>
      <div className="h-[18px] w-[65px] border-r border-[#1a1a1a] pl-[8px] tracking-[-0.4px]">366.62 KB</div>
      <div className="h-[18px] w-[67px] border-r border-[#1a1a1a] pl-[17px] tracking-[-0.45px]">0:04.256</div>
      <div className="h-[18px] w-[83px] border-r border-[#1a1a1a] pl-[8px]">3.90 GB <span className="text-[12px]">空闲</span></div>
    </div>
  );
}

export default function App() {
  return (
    <div className="flex h-[1152px] w-[1536px] flex-col overflow-hidden bg-black font-['Open_Sans','Noto_Sans_CJK_SC',sans-serif] text-[12px] leading-[16px] whitespace-nowrap">
      <TitleBar />
      <MenuBar />
      <ToolBar />
      <div className="mt-[2px] flex h-[1060px] shrink-0 pl-px">
        <div className="w-[321px]">
          <FilesPanel />
          <EffectsPanel />
          <HistoryPanel />
        </div>
        <div className="ml-[4px] w-[1209px]">
          <FrequencyPanel />
          <div className="mt-[4px] flex gap-[4px]">
            <LevelPanel />
            <SelectionPanel />
          </div>
        </div>
      </div>
      <div className="mt-[2px]" />
      <StatusBar />
      <div className="flex h-[2px] gap-[3px] bg-[#3d5c7c] pl-[128px]">
        {range(11).map((i) => (
          <div key={i} className="h-[2px] w-[59px] border-t border-[#3d5c7c] bg-[#9fb4c8]" />
        ))}
      </div>
    </div>
  );
}
